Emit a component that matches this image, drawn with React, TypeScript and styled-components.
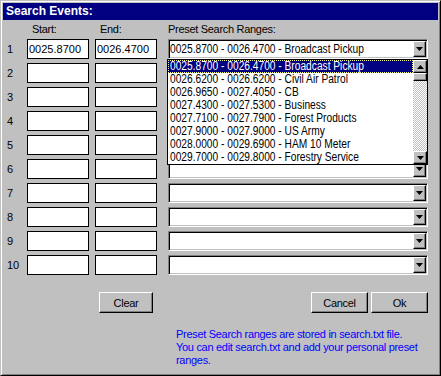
import React from "react";
import styled, { createGlobalStyle } from "styled-components";

const GlobalStyle = createGlobalStyle`
  html, body { margin: 0; padding: 0; background: #c0c0c0; }
  body { font-family: "Liberation Sans", Arial, sans-serif; font-size: 11px; color: #000; }
  * { box-sizing: border-box; }
`;

const Window = styled.div`
  width: 441px;
  height: 376px;
  background: #c0c0c0;
  border: 1px solid;
  border-color: #c0c0c0 #000 #000 #c0c0c0;
  box-shadow: inset 1px 1px #fff, inset -1px -1px #808080;
  padding: 2px;
  display: flex;
  flex-direction: column;
`;

const TitleBar = styled.div`
  height: 17px;
  background: #000080;
  color: #fff;
  font-weight: bold;
  font-size: 12px;
  line-height: 17px;
  padding-left: 3px;
`;

const FormGrid = styled.div`
  margin-top: 3px;
  display: grid;
  grid-template-columns: 24px 68px 73px 260px;
  grid-template-rows: 12px repeat(10, 20px);
  row-gap: 4px;
`;

const HeaderLabel = styled.div<{ $indent: number }>`
  line-height: 12px;
  padding-left: ${(p) => p.$indent}px;
  letter-spacing: -0.3px;
  white-space: nowrap;
`;

const RowNum = styled.div`
  align-self: center;
  padding-left: 4px;
  line-height: 13px;
`;

const Field = styled.div`
  width: 62px;
  height: 20px;
  background: #fff;
  border: 1px solid #000;
  padding-left: 1px;
  line-height: 18px;
  white-space: nowrap;
  overflow: hidden;
`;

const Combo = styled.div`
  position: relative;
  width: 260px;
  height: 20px;
  background: #fff;
  border: 1px solid;
  border-color: #808080 #fff #fff #808080;
  box-shadow: inset 1px 1px #000, inset -1px -1px #c0c0c0;
  display: flex;
  align-items: center;
`;

const ComboText = styled.div`
  flex: 1;
  padding-left: 1px;
  overflow: hidden;
  white-space: nowrap;
  line-height: 13px;
`;

/* the list font of the original is a condensed face */
const Condensed = styled.span`
  display: inline-block;
  font-size: 12px;
  transform: scaleX(0.85);
  transform-origin: left center;
  white-space: nowrap;
`;

const Raised = styled.div`
  background: #c0c0c0;
  border: 1px solid;
  border-color: #fff #000 #000 #fff;
  box-shadow: inset -1px -1px #808080;
  display: flex;
  align-items: center;
  justify-content: center;
`;

const ComboButton = styled(Raised)`
  width: 13px;
  height: 16px;
  margin-right: 1px;
  flex: none;
`;

const DropList = styled.div`
  position: absolute;
  top: calc(100% + 1px);
  left: -2px;
  width: 261px;
  height: 106px;
  background: #fff;
  border: 1px solid #000;
  display: flex;
  z-index: 10;
`;

const Items = styled.div`
  flex: 1;
  display: flex;
  flex-direction: column;
`;

const Item = styled.div<{ $selected?: boolean }>`
  height: 13px;
  line-height: 13px;
  padding-left: 2px;
  white-space: nowrap;
  overflow: hidden;
  background: ${(p) => (p.$selected ? "#000080" : "transparent")};
  color: ${(p) => (p.$selected ? "#fff" : "#000")};
  outline: ${(p) => (p.$selected ? "1px dotted #ffff80" : "none")};
  outline-offset: -1px;
`;

const ScrollBar = styled.div`
  width: 14px;
  display: flex;
  flex-direction: column;
`;

const ScrollButton = styled(Raised)`
  height: 13px;
  flex: none;
`;

const Thumb = styled(Raised)`
  height: 8px;
  flex: none;
`;

const Track = styled.div`
  flex: 1;
  background-image: repeating-conic-gradient(#c0c0c0 0 25%, #fff 0 50%);
  background-size: 2px 2px;
`;

const Footer = styled.div`
  margin-top: 17px;
  display: flex;
  padding: 0 10px 0 96px;
  gap: 3px;
`;

const PushButton = styled.button<{ $w: number; $push?: boolean }>`
  width: ${(p) => p.$w}px;
  height: 21px;
  padding: 0;
  margin-right: ${(p) => (p.$push ? "auto" : "0")};
  background: #c0c0c0;
  border: 1px solid;
  border-color: #fff #000 #000 #fff;
  box-shadow: inset -1px -1px #808080;
  font-family: "Liberation Sans", Arial, sans-serif;
  font-size: 11px;
  letter-spacing: -0.3px;
  color: #000;
`;

const Note = styled.div`
  margin: 15px 0 0 173px;
  color: #0000ff;
  line-height: 13px;
  letter-spacing: -0.3px;
  white-space: nowrap;
`;

const Arrow = ({ up }: { up?: boolean }) => (
  <svg width="7" height="4" viewBox="0 0 7 4">
    <polygon points={up ? "3.5,0 7,4 0,4" : "0,0 7,0 3.5,4"} fill="#000" />
  </svg>
);

const presets = [
  "0025.8700 - 0026.4700 - Broadcast Pickup",
  "0026.6200 - 0026.6200 - Civil Air Patrol",
  "0026.9650 - 0027.4050 - CB",
  "0027.4300 - 0027.5300 - Business",
  "0027.7100 - 0027.7900 - Forest Products",
  "0027.9000 - 0027.9000 - US Army",
  "0028.0000 - 0029.6900 - HAM 10 Meter",
  "0029.7000 - 0029.8000 - Forestry Service",
];

const rows = Array.from({ length: 10 }, (_, i) => i + 1);

export default function App() {
  return (
    <>
      <GlobalStyle />
      <Window>
        <TitleBar>Search Events:</TitleBar>
        <FormGrid>
          <div />
          <HeaderLabel $indent={5}>Start:</HeaderLabel>
          <HeaderLabel $indent={5}>End:</HeaderLabel>
          <HeaderLabel $indent={0}>Preset Search Ranges:</HeaderLabel>
          {rows.map((n) => (
            <React.Fragment key={n}>
              <RowNum>{n}</RowNum>
              <Field>{n === 1 ? "0025.8700" : ""}</Field>
              <Field>{n === 1 ? "0026.4700" : ""}</Field>
              <Combo>
                <ComboText>
                  {n === 1 && <Condensed>{presets[0]}</Condensed>}
                </ComboText>
                <ComboButton>
                  <Arrow />
                </ComboButton>
                {n === 1 && (
                  <DropList>
                    <Items>
                      {presets.map((p, i) => (
                        <Item key={p} $selected={i === 0}>
                          <Condensed>{p}</Condensed>
                        </Item>
                      ))}
                    </Items>
                    <ScrollBar>
                      <ScrollButton>
                        <Arrow up />
                      </ScrollButton>
                      <Thumb />
                      <Track />
                      <ScrollButton>
                        <Arrow />
                      </ScrollButton>
                    </ScrollBar>
                  </DropList>
                )}
              </Combo>
            </React.Fragment>
          ))}
        </FormGrid>
        <Footer>
          <PushButton $w={54} $push>
            Clear
          </PushButton>
          <PushButton $w={57}>Cancel</PushButton>
          <PushButton $w={57}>Ok</PushButton>
        </Footer>
        <Note>
          Preset Search ranges are stored in search.txt file.
          <br />
          You can edit search.txt and add your personal preset
          <br />
          ranges.
        </Note>
      </Window>
    </>
  );
}
